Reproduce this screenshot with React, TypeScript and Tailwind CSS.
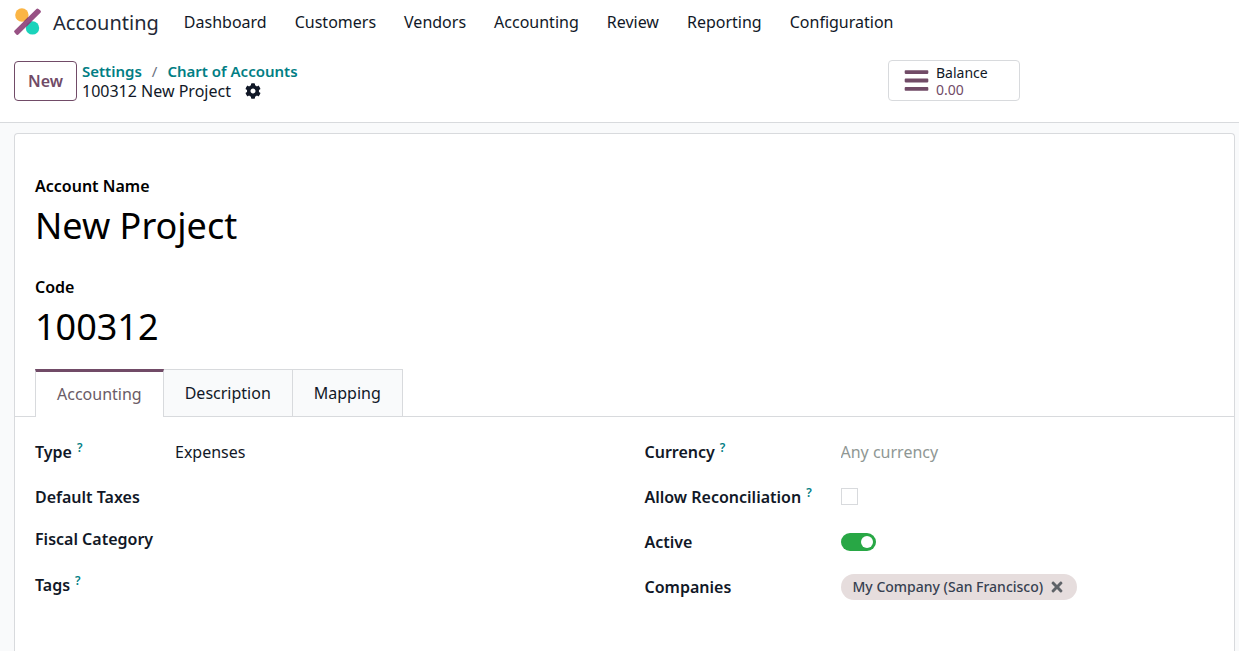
import { useState } from 'react';
import type { ReactNode } from 'react';
import { FaBars, FaCog, FaTimes } from 'react-icons/fa';

const menuItems = ['Dashboard', 'Customers', 'Vendors', 'Accounting', 'Review', 'Reporting', 'Configuration'];
const tabs = ['Accounting', 'Description', 'Mapping'];

function AppLogo() {
  return (
    <svg viewBox="0 0 28 28" className="mb-[3px] size-7" aria-hidden="true">
      <defs>
        <clipPath id="bar">
          <path d="M1.6 22.4 23.4 .9a1.5 1.5 0 0 1 2.1 0l1.9 1.7a1.5 1.5 0 0 1 0 2.1L5.4 26.5a1.5 1.5 0 0 1-2.1 0l-1.7-2a1.5 1.5 0 0 1 0-2.1z" />
        </clipPath>
      </defs>
      <circle cx="8.9" cy="7" r="6.7" fill="#fbb545" />
      <circle cx="19.5" cy="19.9" r="6.7" fill="#1ad3bb" />
      <g clipPath="url(#bar)">
        <rect width="28" height="28" fill="#985184" />
        <circle cx="8.9" cy="7" r="6.7" fill="#8c4252" />
        <circle cx="19.5" cy="19.9" r="6.7" fill="#7d4a7d" />
      </g>
    </svg>
  );
}

function Header() {
  return (
    <header className="flex h-[46px] items-center px-[13px]">
      <a href="#home" className="flex items-center gap-3 text-xl text-[#1f2937]">
        <AppLogo />
        Accounting
      </a>
      <nav className="ml-[25px] flex gap-7 pb-[2px] text-base text-[#111827]">
        {menuItems.map((item) => (
          <button key={item} type="button">{item}</button>
        ))}
      </nav>
    </header>
  );
}

function ControlPanel() {
  return (
    <div className="flex items-start justify-between border-b border-[#d8dadd] pt-[14px] pr-[219px] pb-[21px] pl-[14px]">
      <div className="flex items-center gap-[5px] pt-px">
        <button type="button" className="h-10 w-[63px] rounded border border-[#714b67] text-base font-semibold text-[#714b67]">
          New
        </button>
        <div>
          <div className="flex gap-[10px] text-[15px] leading-5 font-semibold text-[#017e84]">
            <a href="#settings">Settings</a>
            <span className="font-normal text-[#6b7280]">/</span>
            <a href="#accounts">Chart of Accounts</a>
          </div>
          <div className="flex items-center gap-[14px] text-base leading-5 text-[#111827]">
            100312 New Project
            <button type="button" aria-label="Actions">
              <FaCog className="size-4" />
            </button>
          </div>
        </div>
      </div>
      <button type="button" className="flex h-[41px] w-[132px] items-center gap-[6px] rounded border border-[#d8dadd] pl-[14px] text-left text-sm leading-[17px]">
        <FaBars className="size-[27px] text-[#714b67]" />
        <span>
          <span className="block text-[#111827]">Balance</span>
          <span className="block text-[#714b67]">0.00</span>
        </span>
      </button>
    </div>
  );
}

type RowProps = {
  id: string;
  label: string;
  help?: boolean;
  wide?: boolean;
  compact?: boolean;
  children: ReactNode;
};

function FieldRow({ id, label, help, wide, compact, children }: RowProps) {
  return (
    <div className={`flex items-center ${compact ? 'mb-[3px] h-10' : 'h-[45px]'}`}>
      <label htmlFor={id} className={`shrink-0 font-semibold text-[#111827] ${wide ? 'w-[196px]' : 'w-[140px]'}`}>
        {label}
        {help && <sup className="ml-[5px] text-xs text-[#017e84]">?</sup>}
      </label>
      <div className="flex min-w-0 grow items-center">{children}</div>
    </div>
  );
}

export default function App() {
  const [activeTab, setActiveTab] = useState('Accounting');
  const [reconcile, setReconcile] = useState(false);
  const [active, setActive] = useState(true);

  return (
    <div className="flex min-h-screen flex-col bg-white font-['Noto_Sans',sans-serif] text-base">
      <Header />
      <ControlPanel />

      <main className="flex grow flex-col bg-[#f9fafb] pt-[10px] pr-1 pl-[14px]">
        <div className="grow rounded-t border border-b-0 border-[#d8dadd] bg-white">
          {/* Title fields */}
          <div className="flex flex-col px-5 pt-10 text-black">
            <label htmlFor="name" className="leading-6 font-semibold">Account Name</label>
            <input id="name" defaultValue="New Project" className="h-[54px] text-4xl outline-none" />
            <label htmlFor="code" className="mt-[23px] leading-6 font-semibold">Code</label>
            <input id="code" defaultValue="100312" className="h-[54px] text-4xl outline-none" />
          </div>

          {/* Notebook */}
          <div role="tablist" className="mt-4 flex h-12 border-b border-[#d8dadd] px-5">
            {tabs.map((tab) => (
              <button
                key={tab}
                type="button"
                role="tab"
                aria-selected={tab === activeTab}
                onClick={() => setActiveTab(tab)}
                className={
                  tab === activeTab
                    ? 'h-12 border-x border-t-3 border-x-[#d8dadd] border-t-[#714b67] bg-white px-[21px] pb-[2px] text-[#6b5b66]'
                    : 'border-t border-r border-[#d8dadd] bg-[#f9fafb] px-[21px] text-[#111827]'
                }
              >
                {tab}
              </button>
            ))}
          </div>

          <div className="grid grid-cols-2 px-5 pt-3">
            <div>
              <FieldRow id="type" label="Type" help>
                <select id="type" className="w-full appearance-none text-[#111827] outline-none">
                  <option>Expenses</option>
                </select>
              </FieldRow>
              <FieldRow id="taxes" label="Default Taxes">
                <input id="taxes" className="w-full outline-none" />
              </FieldRow>
              <FieldRow id="fiscal" label="Fiscal Category" compact>
                <input id="fiscal" className="w-full outline-none" />
              </FieldRow>
              <FieldRow id="tags" label="Tags" help>
                <input id="tags" className="w-full outline-none" />
              </FieldRow>
            </div>

            <div className="pl-5">
              <FieldRow id="currency" label="Currency" help wide>
                <input id="currency" placeholder="Any currency" className="w-full outline-none placeholder:text-[#8f9794]" />
              </FieldRow>
              <FieldRow id="reconcile" label="Allow Reconciliation" help wide>
                <input
                  id="reconcile"
                  type="checkbox"
                  checked={reconcile}
                  onChange={(e) => setReconcile(e.target.checked)}
                  className="size-[17px] appearance-none border border-[#d8dadd] checked:bg-[#714b67]"
                />
              </FieldRow>
              <FieldRow id="active" label="Active" wide>
                <input
                  id="active"
                  type="checkbox"
                  role="switch"
                  checked={active}
                  onChange={(e) => setActive(e.target.checked)}
                  className="flex h-[18px] w-[35px] appearance-none items-center rounded-full bg-gray-300 px-[3px] before:size-3 before:rounded-full before:bg-white checked:justify-end checked:bg-[#28a745]"
                />
              </FieldRow>
              <FieldRow id="companies" label="Companies" wide>
                <span className="flex h-[26px] shrink-0 items-center gap-[6px] rounded-full bg-[#e6dddd] px-3 text-sm font-medium text-[#374151]">
                  My Company (San Francisco)
                  <button type="button" aria-label="Remove">
                    <FaTimes className="size-4 text-[#5f6368]" />
                  </button>
                </span>
                <input id="companies" className="w-full min-w-0 outline-none" />
              </FieldRow>
            </div>
          </div>
        </div>
      </main>
    </div>
  );
}
